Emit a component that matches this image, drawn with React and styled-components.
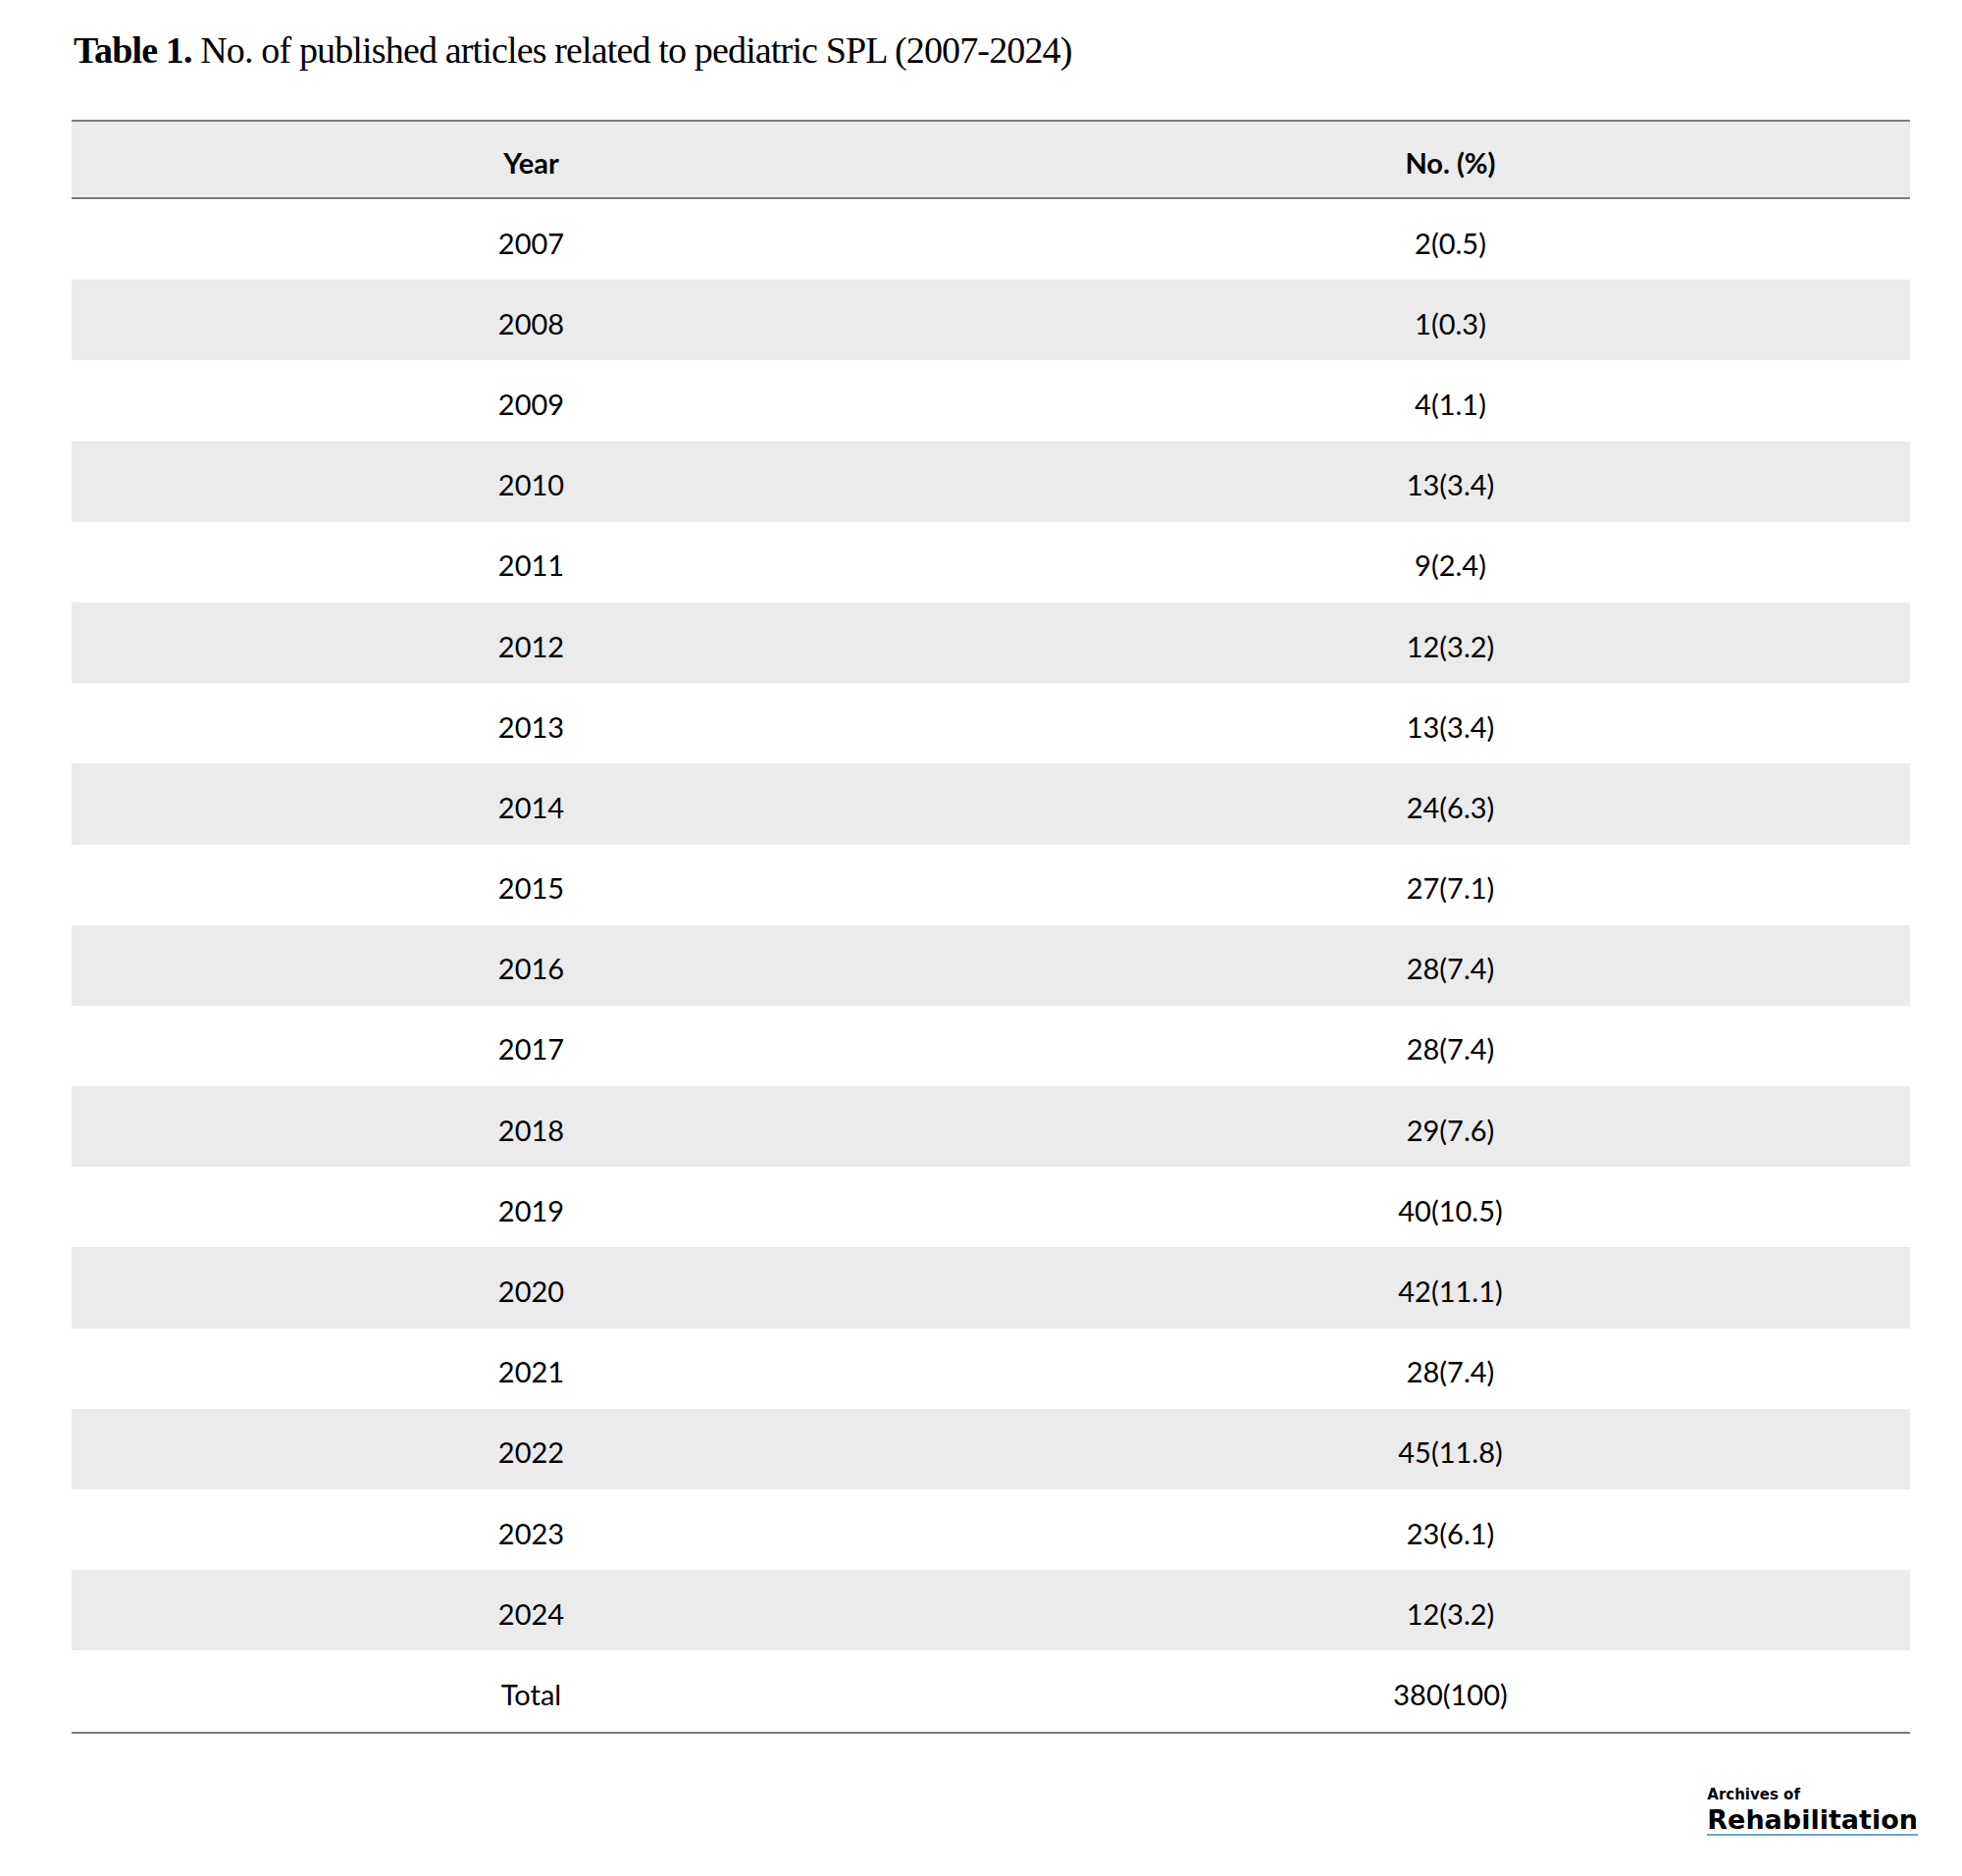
import styled, { createGlobalStyle } from "styled-components"

const rows = [
    ["2007", "2(0.5)"],
    ["2008", "1(0.3)"],
    ["2009", "4(1.1)"],
    ["2010", "13(3.4)"],
    ["2011", "9(2.4)"],
    ["2012", "12(3.2)"],
    ["2013", "13(3.4)"],
    ["2014", "24(6.3)"],
    ["2015", "27(7.1)"],
    ["2016", "28(7.4)"],
    ["2017", "28(7.4)"],
    ["2018", "29(7.6)"],
    ["2019", "40(10.5)"],
    ["2020", "42(11.1)"],
    ["2021", "28(7.4)"],
    ["2022", "45(11.8)"],
    ["2023", "23(6.1)"],
    ["2024", "12(3.2)"],
    ["Total", "380(100)"],
]

const App = () => {
    return (
        <>
            <GlobalStyle />
            <Page>
                <Caption>
                    <b>Table 1.</b> No. of published articles related to pediatric SPL (2007-2024)
                </Caption>
                <Table>
                    <HeadRow>
                        <Cell>Year</Cell>
                        <Cell>No. (%)</Cell>
                    </HeadRow>
                    {rows.map(([year, count], i) => (
                        <Row key={year} $shaded={i % 2 === 1}>
                            <Cell>{year}</Cell>
                            <Cell>{count}</Cell>
                        </Row>
                    ))}
                </Table>
                <Footer>
                    <Logo>
                        <small>Archives of</small>
                        <span>Rehabilitation</span>
                    </Logo>
                </Footer>
            </Page>
        </>
    )
}
export default App

const GlobalStyle = createGlobalStyle`
body{
    margin: 0;
    background: #fff;
}
`
const Page = styled.div`
width: 2000px;
height: 1912px;
padding: 29px 45px 0px 73px;
box-sizing: border-box;
background: #fff;
`
const Caption = styled.div`
font-family: "Liberation Serif", "Times New Roman", serif;
font-size: 38px;
line-height: 44px;
letter-spacing: -0.85px;
color: #000;
padding-left: 2px;
b{
    font-weight: 700;
}
`
const Table = styled.div`
margin-top: 49px;
margin-right: 8px;
border-top: 2px solid #7a7a7a;
border-bottom: 2px solid #7a7a7a;
font-family: Lato, "Open Sans", sans-serif;
font-size: 29px;
color: #000;
`
const HeadRow = styled.div`
display: grid;
grid-template-columns: 1fr 1fr;
align-items: center;
height: 79px;
padding-top: 6px;
box-sizing: border-box;
background: #ebebeb;
border-bottom: 2px solid #7a7a7a;
font-weight: 700;
`
const Row = styled.div`
display: grid;
grid-template-columns: 1fr 1fr;
align-items: center;
height: 82.2px;
padding-top: 6px;
box-sizing: border-box;
background: ${({ $shaded }) => ($shaded ? "#ebebeb" : "#fff")};
`
const Cell = styled.div`
text-align: center;
`
const Footer = styled.div`
display: flex;
justify-content: flex-end;
margin-top: 55px;
`
const Logo = styled.div`
display: flex;
flex-direction: column;
font-family: "DejaVu Sans", sans-serif;
font-weight: 700;
color: #000;
small{
    font-size: 15px;
    line-height: 15px;
    margin-bottom: 4px;
}
span{
    font-size: 27px;
    line-height: 27px;
    padding-bottom: 1px;
    border-bottom: 2px solid #6aa9c8;
}
`
